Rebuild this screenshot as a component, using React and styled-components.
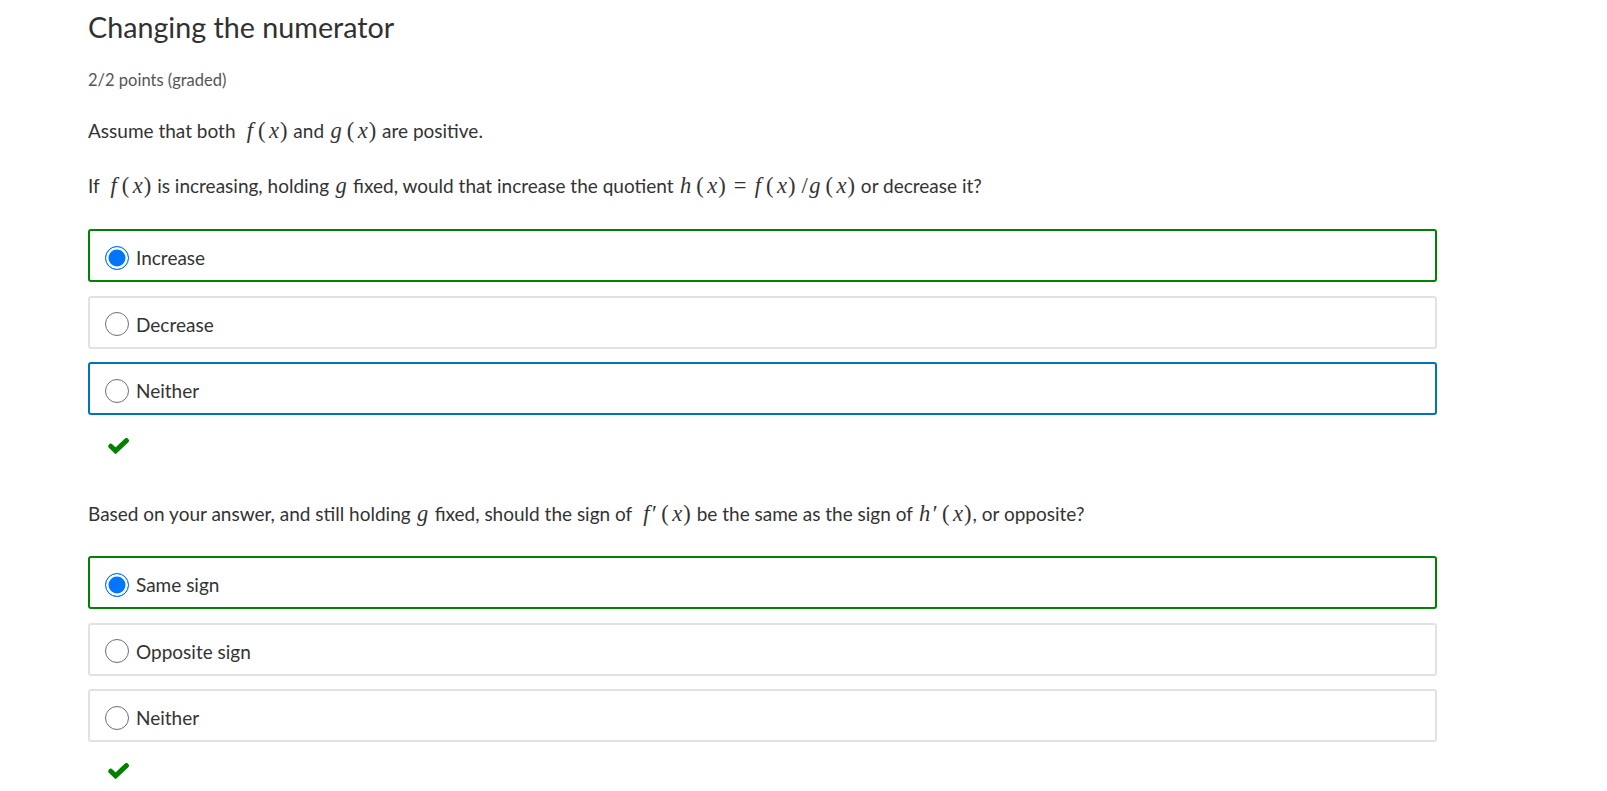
import React from 'react';
import styled, { createGlobalStyle } from 'styled-components';

const GlobalStyle = createGlobalStyle`
  body {
    margin: 0;
    background: #fff;
    font-family: Lato, "Open Sans", sans-serif;
    color: #333;
  }
`

const Page = styled.div`
  padding: 9px 0 0 88px;
  width: 1349px;
`

const Title = styled.h2`
  margin: 0;
  font-size: 28.7px;
  line-height: 36px;
  font-weight: 400;
  color: #313131;
`

const Points = styled.div`
  margin-top: 25px;
  font-size: 16.5px;
  line-height: 20px;
  color: #555;
`

const Para = styled.p`
  margin: ${(p) => p.top || 0}px 0 0;
  font-size: 19px;
  line-height: 24px;
  color: #333;
`

const Mi = styled.span`
  font-family: "Liberation Serif", "DejaVu Serif", serif;
  font-style: italic;
  font-size: 22.5px;
  margin: 0 ${(p) => (p.gap === undefined ? 1.5 : p.gap)}px;
`

const Mo = styled.span`
  font-family: "Liberation Serif", "DejaVu Serif", serif;
  font-size: 22.5px;
  margin: 0 ${(p) => p.gap || 0}px;
`

const Choices = styled.div`
  display: flex;
  flex-direction: column;
  gap: 13.5px;
  margin-top: ${(p) => p.top}px;
`

const Choice = styled.label`
  display: flex;
  align-items: center;
  gap: 7px;
  height: 53px;
  box-sizing: border-box;
  padding: 4px 0 0 15px;
  border: 2px solid ${(p) => p.$border};
  border-radius: 3px;
  font-size: 19px;
  color: #333;
`

const Radio = styled.span`
  width: 24px;
  height: 24px;
  box-sizing: border-box;
  border-radius: 50%;
  border: ${(p) => (p.$on ? '1.5px solid #0075ff' : '1.5px solid #6f6f6f')};
  background: ${(p) => (p.$on ? '#0075ff' : '#fff')};
  box-shadow: ${(p) => (p.$on ? 'inset 0 0 0 2.5px #fff' : 'none')};
  flex: none;
`

const Correct = styled.div`
  margin: ${(p) => p.top}px 0 0 20px;
  height: 16px;
  display: flex;
`

const CheckMark = () => (
  <svg width="21" height="16" viewBox="0 0 21 16">
    <polyline
      points="2.8,8.2 7.6,12.8 18.4,2.6"
      fill="none"
      stroke="#008100"
      strokeWidth="5"
      strokeLinecap="round"
      strokeLinejoin="miter"
    />
  </svg>
)

const Fx = ({ name, prime }) => (
  <>
    <Mi>{name}</Mi>
    {prime && <Mo gap={1}>′</Mo>}
    <Mo gap={3.5}>(</Mo>
    <Mi gap={0}>x</Mi>
    <Mo gap={1}>)</Mo>
  </>
)

const borderFor = (state) => {
  if (state === 'correct') return '#008100';
  if (state === 'focus') return '#0075b4';
  return '#e2e2e2';
}

const Options = ({ top, items }) => (
  <Choices top={top}>
    {items.map((it) => (
      <Choice key={it.label} $border={borderFor(it.state)}>
        <Radio $on={it.on} />
        {it.label}
      </Choice>
    ))}
  </Choices>
)

export default function App() {
  return (
    <Page>
      <GlobalStyle />
      <Title>Changing the numerator</Title>
      <Points>2/2 points (graded)</Points>
      <Para top={29}>
        Assume that both&nbsp; <Fx name="f" /> and <Fx name="g" /> are positive.
      </Para>
      <Para top={31}>
        If&nbsp; <Fx name="f" /> is increasing, holding <Mi>g</Mi> fixed, would that increase the quotient <Fx name="h" />
        <Mo gap={7}>=</Mo>
        <Fx name="f" /> <Mo>/</Mo><Fx name="g" /> or decrease it?
      </Para>
      <Options
        top={31}
        items={[
          { label: 'Increase', on: true, state: 'correct' },
          { label: 'Decrease' },
          { label: 'Neither', state: 'focus' },
        ]}
      />
      <Correct top={23}><CheckMark /></Correct>
      <Para top={48}>
        Based on your answer, and still holding <Mi>g</Mi> fixed, should the sign of&nbsp; <Fx name="f" prime /> be the same as the sign of <Fx name="h" prime />, or opposite?
      </Para>
      <Options
        top={30}
        items={[
          { label: 'Same sign', on: true, state: 'correct' },
          { label: 'Opposite sign' },
          { label: 'Neither' },
        ]}
      />
      <Correct top={21}><CheckMark /></Correct>
    </Page>
  );
}
